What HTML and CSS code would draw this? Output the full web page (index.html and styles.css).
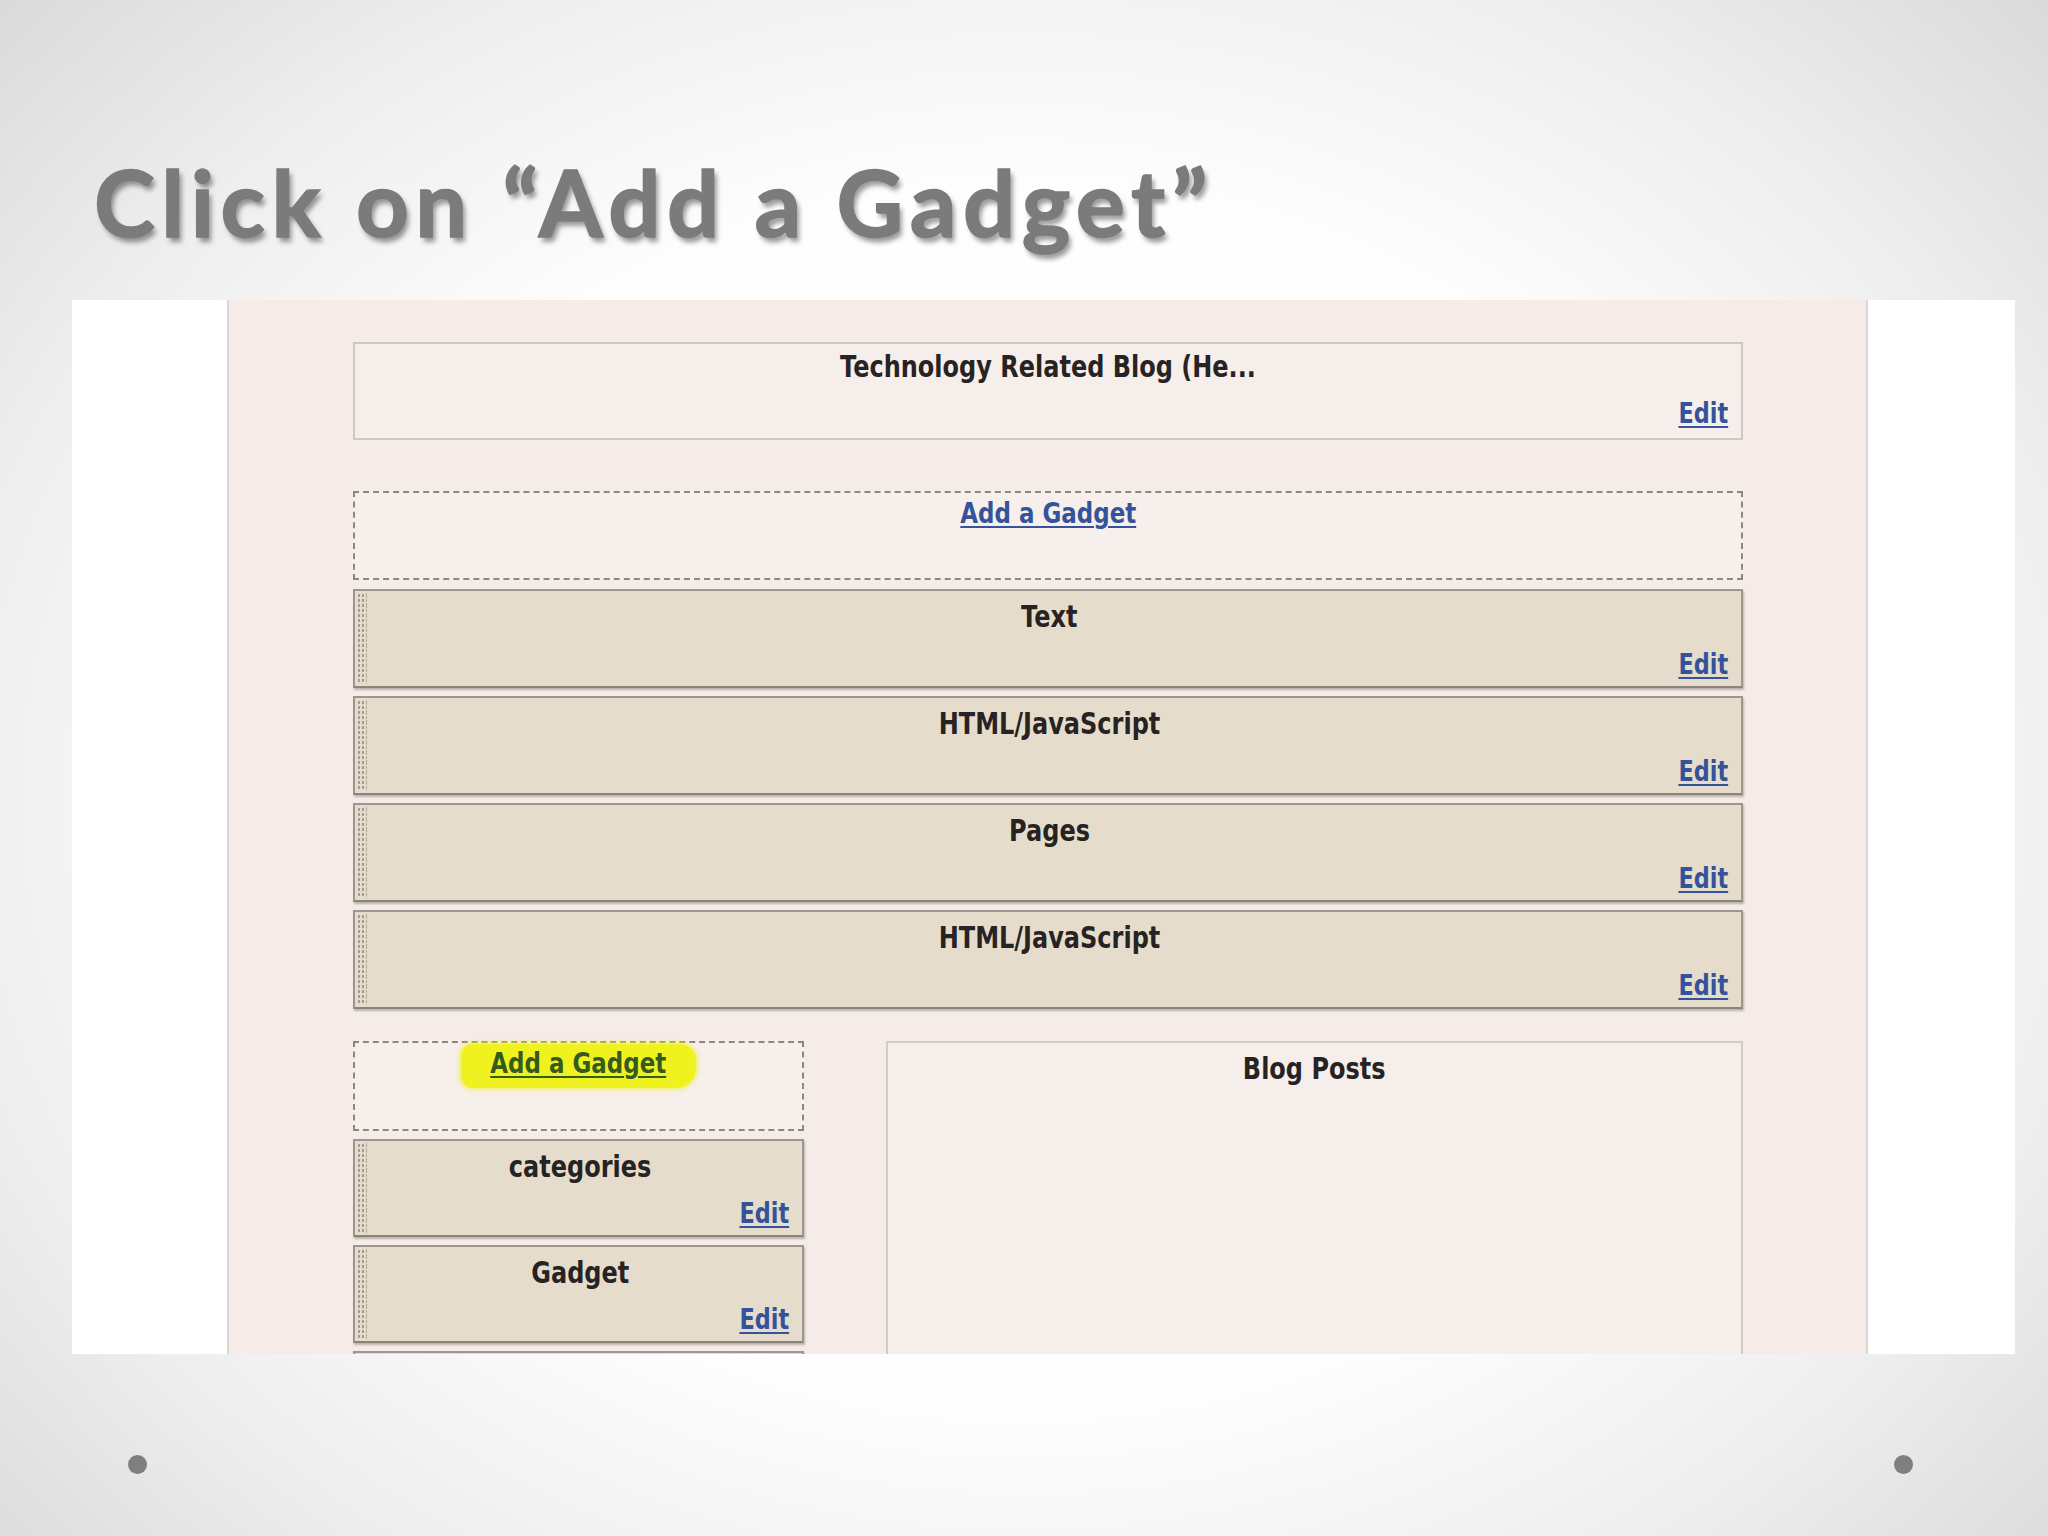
FILE: index.html
```html
<!DOCTYPE html>
<html>
<head>
<meta charset="utf-8">
<link rel="stylesheet" href="styles.css">
</head>
<body>
<div class="slide">
  <header class="head">
    <h1 class="title">Click on “Add a Gadget”</h1>
  </header>
  <div class="panel">
    <div class="layout">
      <div class="content">
        <div class="box plain top">
          <div class="name"><span class="sx">Technology Related Blog (He...</span></div>
          <div class="edit"><a class="sx-r">Edit</a></div>
        </div>
        <div class="add wide">
          <a class="sx add-link">Add a Gadget</a>
        </div>
        <div class="stack">
          <div class="box gadget">
            <div class="name"><span class="sx">Text</span></div>
            <div class="edit"><a class="sx-r">Edit</a></div>
          </div>
          <div class="box gadget">
            <div class="name"><span class="sx">HTML/JavaScript</span></div>
            <div class="edit"><a class="sx-r">Edit</a></div>
          </div>
          <div class="box gadget">
            <div class="name"><span class="sx">Pages</span></div>
            <div class="edit"><a class="sx-r">Edit</a></div>
          </div>
          <div class="box gadget">
            <div class="name"><span class="sx">HTML/JavaScript</span></div>
            <div class="edit"><a class="sx-r">Edit</a></div>
          </div>
        </div>
        <div class="cols">
          <div class="side">
            <div class="add small">
              <span class="hl"><a class="sx add-link green">Add a Gadget</a></span>
            </div>
            <div class="box gadget sm">
              <div class="name"><span class="sx">categories</span></div>
              <div class="edit"><a class="sx-r">Edit</a></div>
            </div>
            <div class="box gadget sm">
              <div class="name"><span class="sx">Gadget</span></div>
              <div class="edit"><a class="sx-r">Edit</a></div>
            </div>
            <div class="box gadget sm"></div>
          </div>
          <div class="main">
            <div class="box plain posts">
              <div class="name"><span class="sx">Blog Posts</span></div>
            </div>
          </div>
        </div>
      </div>
    </div>
  </div>
  <footer class="foot">
    <span class="dot"></span>
    <span class="dot"></span>
  </footer>
</div>
</body>
</html>
```

FILE: styles.css
```css
html, body {
  margin: 0;
  padding: 0;
}
body {
  width: 2048px;
  height: 1536px;
  overflow: hidden;
  background: radial-gradient(ellipse 1500px 1250px at 50% 52%, #ffffff 0%, #fefefe 48%, #eeeeee 72%, #d4d4d4 100%);
  font-family: "DejaVu Sans", "Liberation Sans", sans-serif;
}
.slide {
  width: 2048px;
  height: 1536px;
  display: flex;
  flex-direction: column;
}
.head {
  height: 300px;
  box-sizing: border-box;
  padding: 147px 0 0 94px;
}
.title {
  margin: 0;
  font-family: Lato, "Liberation Sans", sans-serif;
  font-weight: 700;
  font-size: 92px;
  line-height: 1.2;
  color: #7b7b7b;
  letter-spacing: 6.5px;
  -webkit-text-stroke: 1.5px #7b7b7b;
  text-shadow: 3px 5px 5px rgba(0, 0, 0, 0.4);
  white-space: nowrap;
}
.panel {
  margin-left: 72px;
  width: 1943px;
  height: 1054px;
  background: #ffffff;
  overflow: hidden;
  display: flex;
}
.layout {
  margin-left: 155px;
  width: 1641px;
  height: 100%;
  box-sizing: border-box;
  background: #f5ece8;
  border-left: 2px solid #dcd6d2;
  border-right: 2px solid #dcd6d2;
}
.content {
  margin: 42px 0 0 124px;
  width: 1390px;
}
.box {
  box-sizing: border-box;
  display: flex;
  flex-direction: column;
  justify-content: space-between;
  position: relative;
}
.plain {
  border: 2px solid #cfc7c3;
  background: #f6eeea;
}
.top {
  height: 98px;
  padding: 5px 13px 9px 13px;
}
.name {
  text-align: center;
  font-weight: 700;
  font-size: 30px;
  line-height: 36px;
  color: #262322;
}
.sx {
  display: inline-block;
  transform: scaleX(0.8);
  transform-origin: 50% 50%;
  white-space: nowrap;
}
.edit {
  text-align: right;
  font-weight: 700;
  font-size: 28px;
  line-height: 30px;
}
.sx-r {
  display: inline-block;
  transform: scaleX(0.8);
  transform-origin: 100% 50%;
  color: #34539a;
  text-decoration: underline;
  text-decoration-thickness: 2px;
  text-underline-offset: 3px;
}
.add {
  box-sizing: border-box;
  border: 2px dashed #8d8783;
  background: #f6efeb;
  text-align: center;
  font-weight: 700;
  font-size: 28px;
  line-height: 34px;
}
.add.wide {
  height: 89px;
  margin-top: 51px;
  margin-bottom: 9px;
  padding-top: 4px;
}
.add-link {
  color: #34539a;
  text-decoration: underline;
  text-decoration-thickness: 2px;
  text-underline-offset: 3px;
  transform: scaleX(0.82);
}
.stack {
  display: flex;
  flex-direction: column;
  gap: 8px;
}
.gadget {
  height: 99px;
  border: 2px solid #9d978f;
  border-bottom-color: #8a847d;
  background: #e6dccb;
  padding: 8px 13px 6px 16px;
  box-shadow: 1px 2px 2px rgba(80, 70, 60, 0.35);
}
.gadget::before {
  content: "";
  position: absolute;
  left: 2px;
  top: 2px;
  bottom: 2px;
  width: 9px;
  background-image: radial-gradient(circle, #a39b91 1.1px, transparent 1.5px);
  background-size: 4px 5px;
  border-right: 1px dotted #bdb5a9;
}
.cols {
  display: flex;
  gap: 82px;
  margin-top: 32px;
  align-items: flex-start;
}
.side {
  width: 451px;
  display: flex;
  flex-direction: column;
  gap: 8px;
}
.add.small {
  height: 90px;
  padding-top: 1px;
}
.hl {
  display: inline-block;
  background: #eff21e;
  border-radius: 12px 16px 20px 12px;
  padding: 3px 10px 7px 10px;
  box-shadow: 0 0 4px 2px rgba(239, 242, 30, 0.6);
}
.green {
  color: #355a1e;
}
.sm {
  height: 98px;
}
.main {
  flex: 1;
}
.posts {
  height: 400px;
  justify-content: flex-start;
  padding-top: 8px;
  border-color: #d3cbc7;
}
.foot {
  display: flex;
  justify-content: space-between;
  padding: 0 135px 0 128px;
  margin-top: 101px;
}
.dot {
  width: 19px;
  height: 19px;
  border-radius: 50%;
  background: #7f7f7f;
}
```
